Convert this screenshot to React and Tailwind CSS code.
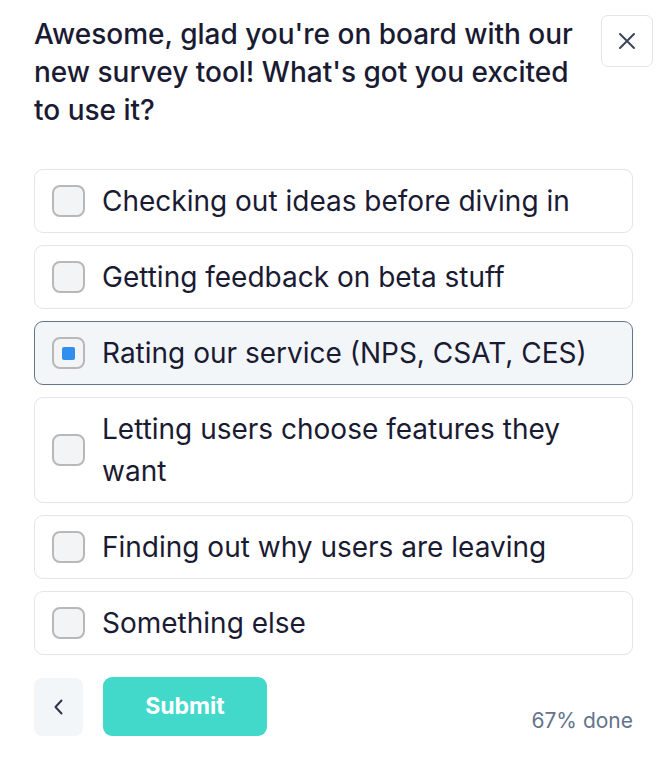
import React from "react";

const options = [
  { label: "Checking out ideas before diving in", checked: false },
  { label: "Getting feedback on beta stuff", checked: false },
  { label: "Rating our service (NPS, CSAT, CES)", checked: true },
  { label: "Letting users choose features they want", checked: false },
  { label: "Finding out why users are leaving", checked: false },
  { label: "Something else", checked: false },
];

function Option({ label, checked }) {
  return (
    <div
      className={
        "flex items-center gap-[17px] rounded-[9px] border pl-[17px] pr-4 py-[10px] " +
        (checked ? "border-[#64748b] bg-[#f3f6f9]" : "border-[#e2e5ea] bg-white")
      }
    >
      <div className="flex h-[32px] w-[33px] shrink-0 items-center justify-center rounded-[8px] border-2 border-[#b8b8b8] bg-[#f3f4f5]">
        {checked && <div className="h-[13px] w-[13px] rounded-[2px] bg-[#2f8ef0]" />}
      </div>
      <span className="text-[28px] leading-[42px] text-[#1a1b33]">{label}</span>
    </div>
  );
}

export default function App() {
  return (
    <div
      className="relative min-h-[758px] w-[668px] bg-white"
      style={{ fontFamily: "Inter, 'Noto Sans', sans-serif" }}
    >
      <button className="absolute left-[601px] top-[15px] flex h-[52px] w-[52px] items-center justify-center rounded-[7px] border border-[#e3e5e8] bg-white">
        <svg width="20" height="20" viewBox="0 0 20 20" fill="none" stroke="#3b4557" strokeWidth="2" strokeLinecap="round">
          <path d="M3 3L17 17M17 3L3 17" />
        </svg>
      </button>
      <div className="pl-[34px] pr-[35px] pt-[15px]">
        <h1 className="w-[545px] text-[28px] font-medium leading-[38px] text-[#1a1b33]">
          Awesome, glad you're on board with our new survey tool! What's got you excited to use it?
        </h1>
        <div className="mt-[40px] flex flex-col gap-3">
          {options.map((o) => (
            <Option key={o.label} {...o} />
          ))}
        </div>
        <div className="mt-[22px] flex items-end justify-between">
          <div className="flex items-center gap-[20px]">
            <button className="flex h-[58px] w-[49px] items-center justify-center rounded-[8px] bg-[#f3f6f9]">
              <svg width="12" height="20" viewBox="0 0 12 20" fill="none" stroke="#2e3648" strokeWidth="2" strokeLinecap="round" strokeLinejoin="round">
                <path d="M8.5 3.5L2.5 10L8.5 16.5" />
              </svg>
            </button>
            <button className="flex h-[59px] w-[164px] items-center justify-center rounded-[9px] bg-[#42d9cb] text-[23px] font-bold text-white">
              Submit
            </button>
          </div>
          <span className="mb-[1px] text-[21px] leading-[28px] text-[#64748b]">67% done</span>
        </div>
      </div>
    </div>
  );
}
